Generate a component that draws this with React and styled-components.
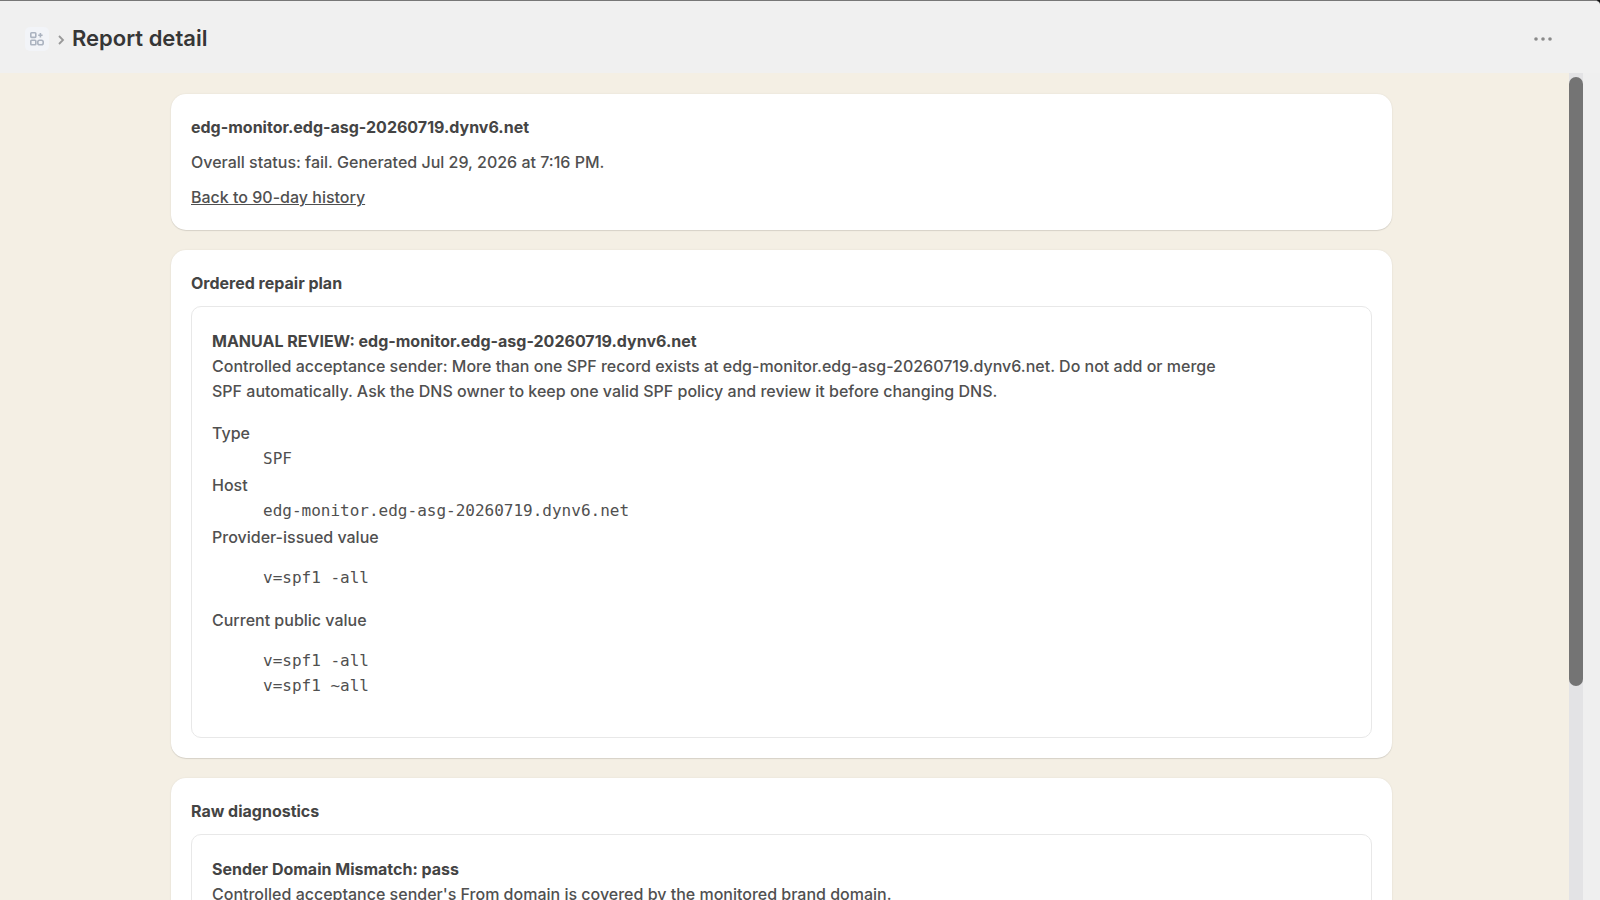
import styled, { createGlobalStyle } from 'styled-components';

const GlobalStyle = createGlobalStyle`
  * {
    box-sizing: border-box;
  }

  body {
    margin: 0;
    background: #111;
    color: #505050;
    font-family: Inter, "Liberation Sans", sans-serif;
    font-size: 16px;
    font-weight: 500;
    line-height: 25px;
  }
`

const Page = styled.div`
  display: flex;
  flex-direction: column;
  height: 100vh;
  overflow: hidden;
  border-top: 1px solid #777;
  border-top-right-radius: 5px;
  background: #efefef;
`

const Header = styled.header`
  display: flex;
  align-items: center;
  flex: none;
  height: 72px;
  padding: 4px 44px 0 25px;
  background: #f0f0f0;
`

const AppLink = styled.a`
  display: grid;
  place-items: center;
  width: 24px;
  height: 24px;
  border-radius: 5px;
  background: #f2f4f8;
  color: #abb3c0;
`

const Chevron = styled.svg`
  width: 8px;
  height: 10px;
  margin: 2px 7px 0 8px;
  color: #999;
`

const Title = styled.h1`
  flex: 1;
  margin: 0;
  padding-bottom: 2px;
  color: #363636;
  font-size: 22px;
  font-weight: 600;
  line-height: 28px;
`

const MenuButton = styled.button`
  display: grid;
  place-items: center;
  width: 26px;
  height: 26px;
  padding: 0;
  border: 0;
  background: none;
  color: #8a8a8a;
`

const Body = styled.div`
  display: flex;
  flex: 1;
  min-height: 0;
`

const Main = styled.main`
  flex: 1;
  min-height: 0;
  overflow: hidden;
  padding: 21px 6px 0 0;
  background: #f4efe4;
`

const Cards = styled.div`
  display: flex;
  flex-direction: column;
  gap: 20px;
  max-width: 1221px;
  margin: 0 auto;
`

const Card = styled.section`
  display: flex;
  flex-direction: column;
  gap: 10px;
  padding: 21px 20px 20px;
  border-radius: 15px;
  background: #fff;
  box-shadow: 0 1px 1px rgba(0, 0, 0, 0.1), 0 0 2px rgba(0, 0, 0, 0.08);
`

const Heading = styled.h2`
  margin: 0;
  color: #444;
  font-size: 16px;
  font-weight: 700;
  line-height: 25px;
`

const Text = styled.p`
  max-width: 1030px;
  margin: 0;
`

const BackLink = styled.a`
  align-self: flex-start;
  color: inherit;
  text-decoration: underline;
`

const Box = styled.div`
  padding: 22px 20px;
  border: 1px solid #e8e8e8;
  border-radius: 10px;
`

const Records = styled.dl`
  margin: 16px 0;
`

const Term = styled.dt`
  line-height: 26px;
`

const Value = styled.dd`
  margin: 0 0 0 51px;
  font-family: "DejaVu Sans Mono", monospace;
  font-weight: 400;
  line-height: 26px;
`

const Lines = styled.pre`
  margin: 15px 0 17px;
  font: inherit;
  line-height: 25px;
`

const ScrollTrack = styled.div`
  width: 14px;
  margin-right: 17px;
  padding-top: 4px;
  background: #e3e3e5;
`

const ScrollThumb = styled.div`
  height: 74%;
  border-radius: 7px;
  background: #747474;
`

const domain = 'edg-monitor.edg-asg-20260719.dynv6.net'
const reviewText = `Controlled acceptance sender: More than one SPF record exists at ${domain}. Do not add or merge SPF automatically. Ask the DNS owner to keep one valid SPF policy and review it before changing DNS.`

const AppIcon = () => (
  <svg width="14" height="14" viewBox="0 0 14 14" fill="none" stroke="currentColor" strokeWidth="1.6">
    <rect x="0.8" y="0.8" width="5" height="4.6" rx="0.8" />
    <rect x="0.8" y="8.2" width="5" height="4.6" rx="0.8" />
    <rect x="7.8" y="8.2" width="5.4" height="4.6" rx="1.8" />
    <path d="M10.4 1v4.4M8.2 3.2h4.4" />
  </svg>
)

export default function App() {
  return (
    <Page>
      <GlobalStyle />
      <Header>
        <AppLink href="#" aria-label="Apps"><AppIcon /></AppLink>
        <Chevron viewBox="0 0 8 10" fill="none" stroke="currentColor" strokeWidth="1.8">
          <path d="M2 1l4 4-4 4" />
        </Chevron>
        <Title>Report detail</Title>
        <MenuButton aria-label="More actions">
          <svg width="18" height="4" viewBox="0 0 18 4" fill="currentColor">
            <circle cx="2" cy="2" r="1.8" />
            <circle cx="9" cy="2" r="1.8" />
            <circle cx="16" cy="2" r="1.8" />
          </svg>
        </MenuButton>
      </Header>
      <Body>
        <Main>
          <Cards>
            <Card>
              <Heading>{domain}</Heading>
              <Text>Overall status: fail. Generated Jul 29, 2026 at 7:16 PM.</Text>
              <BackLink href="#">Back to 90-day history</BackLink>
            </Card>
            <Card>
              <Heading>Ordered repair plan</Heading>
              <Box>
                <Heading as="h3">{`MANUAL REVIEW: ${domain}`}</Heading>
                <Text>{reviewText}</Text>
                <Records>
                  <Term>Type</Term>
                  <Value>SPF</Value>
                  <Term>Host</Term>
                  <Value>{domain}</Value>
                  <Term>Provider-issued value</Term>
                  <Value><Lines>v=spf1 -all</Lines></Value>
                  <Term>Current public value</Term>
                  <Value><Lines>{'v=spf1 -all\nv=spf1 ~all'}</Lines></Value>
                </Records>
              </Box>
            </Card>
            <Card>
              <Heading>Raw diagnostics</Heading>
              <Box>
                <Heading as="h3">Sender Domain Mismatch: pass</Heading>
                <Text>Controlled acceptance sender's From domain is covered by the monitored brand domain.</Text>
              </Box>
            </Card>
          </Cards>
        </Main>
        <ScrollTrack>
          <ScrollThumb />
        </ScrollTrack>
      </Body>
    </Page>
  );
}
